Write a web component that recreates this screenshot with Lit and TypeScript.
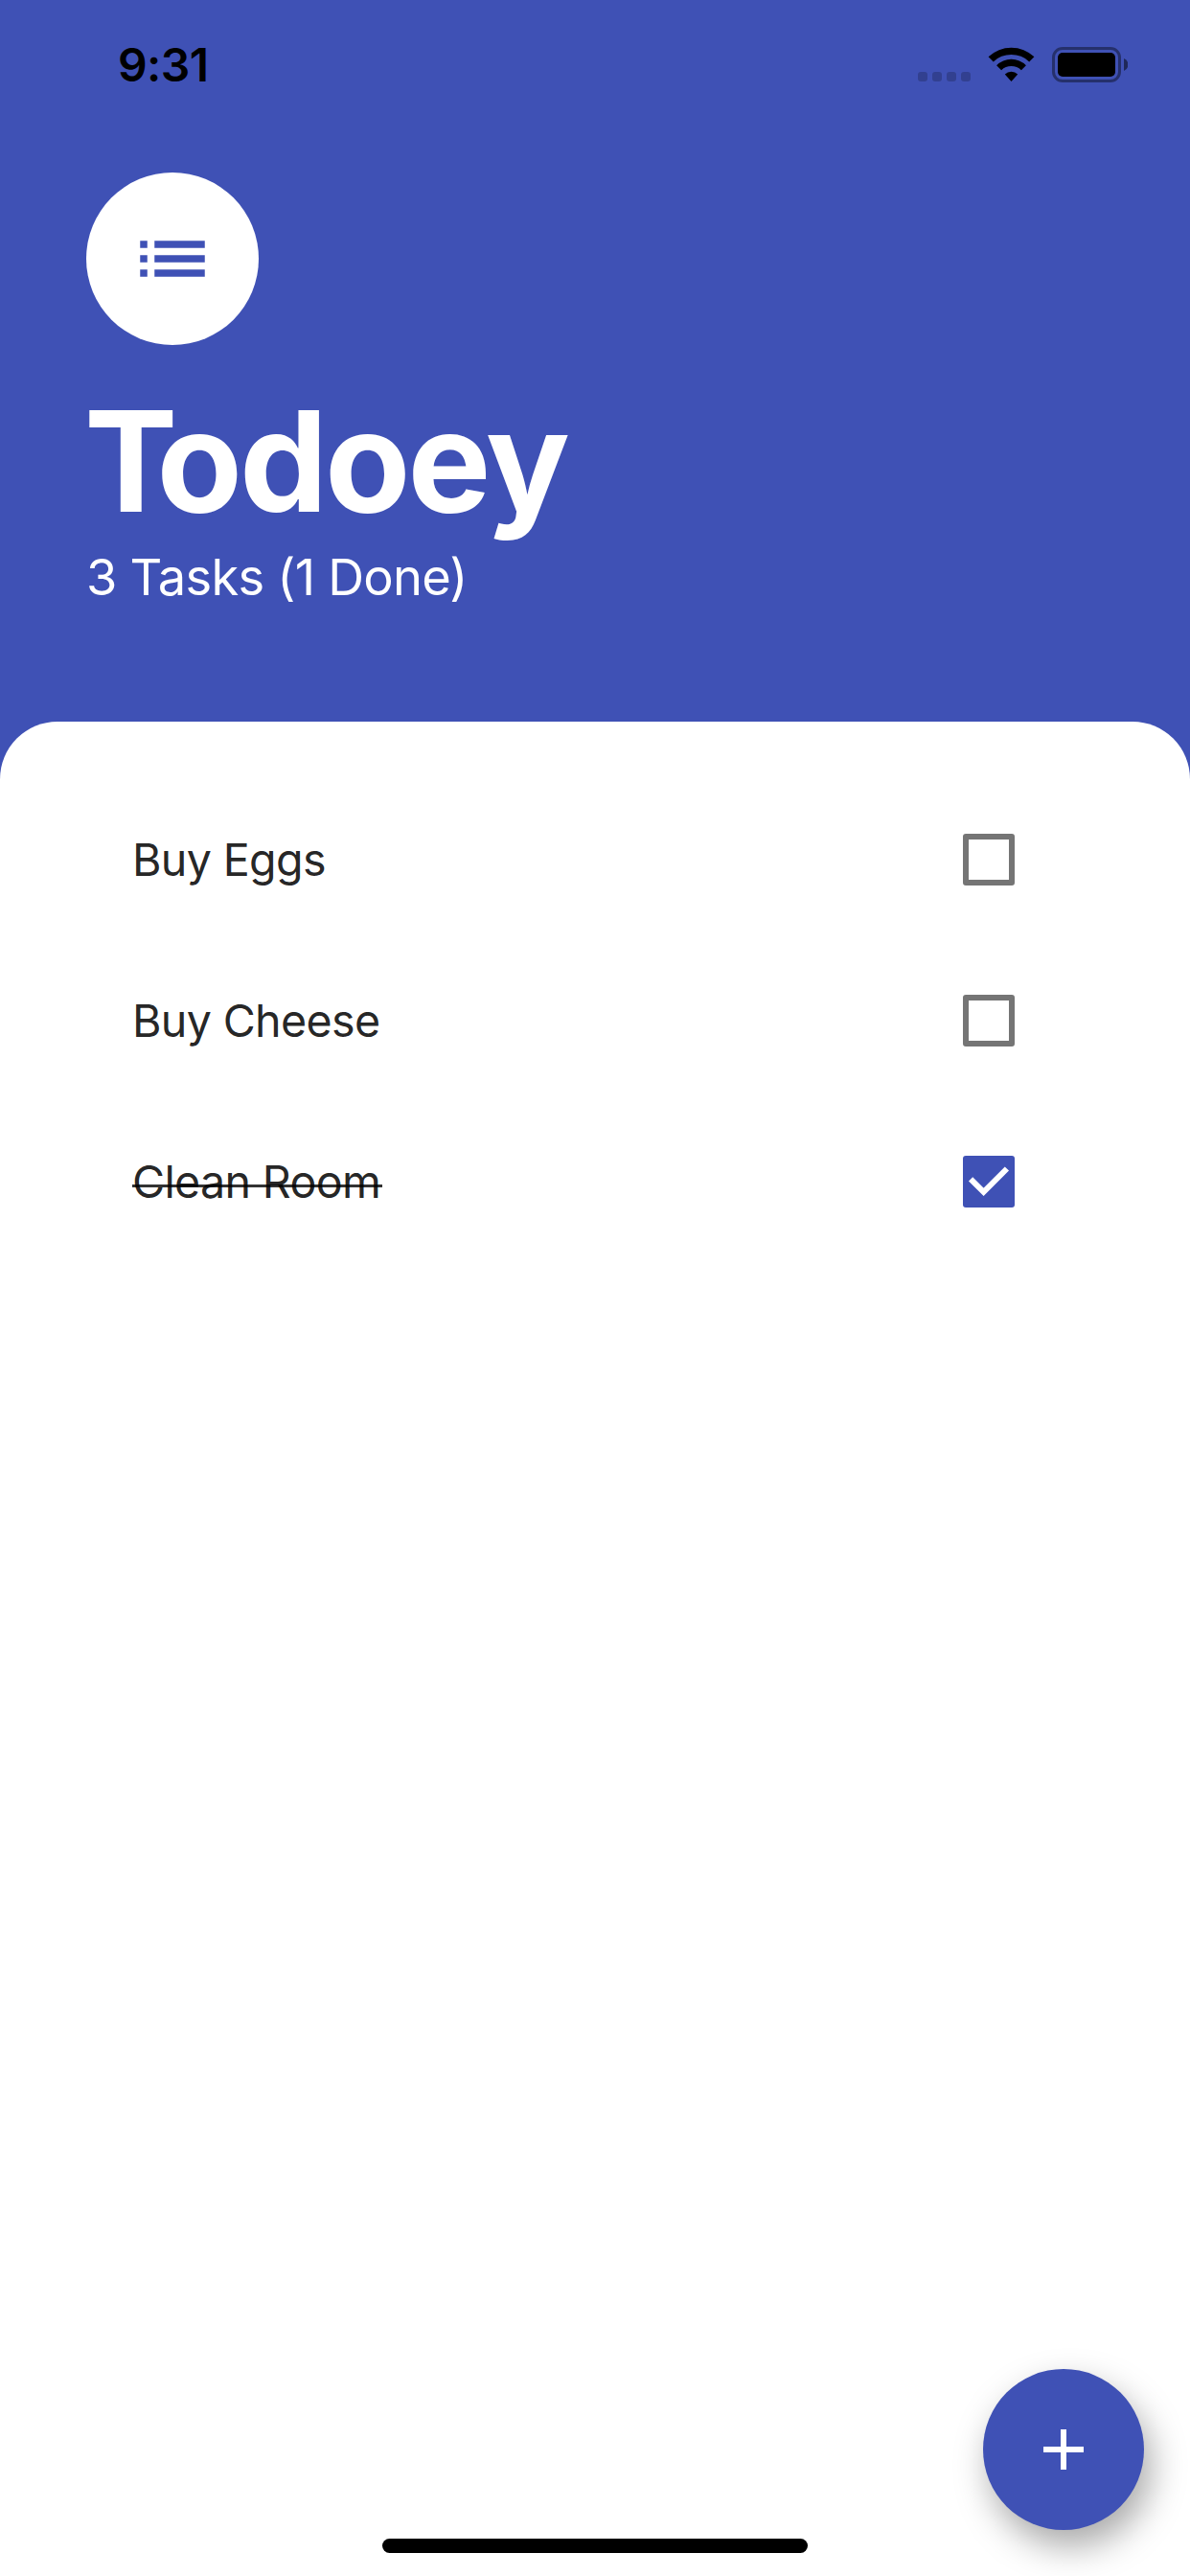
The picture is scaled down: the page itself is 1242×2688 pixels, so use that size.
import { LitElement, html, css, svg } from "lit";
import { customElement, property, state } from "lit/decorators.js";

interface Task {
  name: string;
  done: boolean;
}

@customElement("status-bar")
class StatusBar extends LitElement {
  static styles = css`
    :host {
      display: flex;
      justify-content: space-between;
      height: 100px;
      padding: 0 65px 0 123px;
      color: #000;
    }
    .time {
      margin-top: 38px;
      font-size: 48px;
      line-height: 60px;
      font-weight: 600;
      letter-spacing: -0.6px;
    }
    .icons {
      width: 219px;
      height: 37px;
      margin-top: 49px;
    }
  `;

  render() {
    return html`
      <div class="time">9:31</div>
      <svg class="icons" viewBox="0 0 219 37">
        <g fill="#000" fill-opacity="0.2">
          ${[0, 15, 30, 45].map(
            (x) => svg`<rect x=${x} y="26" width="10" height="10" rx="3" />`
          )}
        </g>
        <path d="M73.6 10.3A34.5 34.5 0 0 1 121.4 10.3L116.2 15.4A27 27 0 0 0 78.8 15.4Z" />
        <path d="M82.1 19.2A21.8 21.8 0 0 1 112.9 19.2L107.9 24.2A15 15 0 0 0 87.1 24.2Z" />
        <path d="M90.8 28.4A10 10 0 0 1 104.2 28.4L97.5 36Z" />
        <rect x="141.5" y="1.5" width="69" height="34" rx="9.5" fill="none" stroke="#000" stroke-opacity="0.4" stroke-width="3" />
        <rect x="146" y="6" width="60" height="25" rx="5" />
        <path d="M215 12A7 7 0 0 1 215 25Z" fill-opacity="0.5" />
      </svg>
    `;
  }
}

@customElement("task-row")
class TaskRow extends LitElement {
  @property() name = "";
  @property({ type: Boolean }) done = false;

  static styles = css`
    :host {
      display: flex;
      align-items: center;
      justify-content: space-between;
      height: 168px;
      padding: 0 93px 0 48px;
    }
    .name {
      font-size: 46.6px;
      line-height: 60px;
      color: rgba(0, 0, 0, 0.87);
      letter-spacing: -0.65px;
    }
    .done {
      padding-right: 2px;
      background: linear-gradient(rgba(0, 0, 0, 0.8), rgba(0, 0, 0, 0.8)) 0 33px / 100% 3px no-repeat;
    }
    .box {
      width: 54px;
      height: 54px;
      box-sizing: border-box;
      border: 6px solid #757575;
      border-radius: 3px;
    }
    .checked {
      border: 0;
      background: #3f51b5;
    }
    .check {
      display: block;
      width: 54px;
      height: 54px;
    }
  `;

  render() {
    return html`
      <span class="name ${this.done ? "done" : ""}">${this.name}</span>
      <span class="box ${this.done ? "checked" : ""}">
        ${this.done
          ? html`<svg class="check" viewBox="0 0 54 54">
              <path d="M8.1 24.3L21.6 37.8L45.9 13.5" fill="none" stroke="#fff" stroke-width="6" />
            </svg>`
          : ""}
      </span>
    `;
  }
}

@customElement("app-root")
class AppRoot extends LitElement {
  @state() private tasks: Task[] = [
    { name: "Buy Eggs", done: false },
    { name: "Buy Cheese", done: false },
    { name: "Clean Room", done: true },
  ];

  static styles = css`
    :host {
      display: flex;
      flex-direction: column;
      position: relative;
      width: 1242px;
      height: 2688px;
      overflow: hidden;
      background: #3f51b5;
      font-family: Inter, "Liberation Sans", sans-serif;
    }
    .header {
      display: flex;
      flex-direction: column;
      height: 573px;
      margin-top: 80px;
      padding: 0 90px;
      color: #fff;
    }
    .avatar {
      display: flex;
      align-items: center;
      justify-content: center;
      width: 180px;
      height: 180px;
      border-radius: 50%;
      background: #fff;
    }
    .list-icon {
      width: 90px;
      height: 90px;
      fill: #3f51b5;
    }
    .title {
      margin: 33px 0 0 -2px;
      font-size: 146px;
      line-height: 176px;
      font-weight: 700;
      letter-spacing: -3px;
    }
    .initial {
      letter-spacing: -22px;
    }
    .subtitle {
      font-size: 52.4px;
      line-height: 66px;
      letter-spacing: -0.75px;
    }
    .sheet {
      flex: 1;
      padding: 60px 90px 0;
      border-radius: 60px 60px 0 0;
      background: #fff;
    }
    .fab {
      position: absolute;
      left: 1026px;
      top: 2472px;
      display: flex;
      align-items: center;
      justify-content: center;
      width: 168px;
      height: 168px;
      border-radius: 50%;
      background: #3f51b5;
      box-shadow: 7px 17px 36px rgba(0, 0, 0, 0.34);
    }
    .plus {
      width: 72px;
      height: 72px;
      fill: #fff;
    }
    .home {
      position: absolute;
      left: 399px;
      top: 2649px;
      width: 444px;
      height: 15px;
      border-radius: 8px;
      background: #000;
    }
  `;

  render() {
    const done = this.tasks.filter((t) => t.done).length;
    return html`
      <status-bar></status-bar>
      <div class="header">
        <div class="avatar">
          <svg class="list-icon" viewBox="0 0 24 24">
            <path d="M3 13h2v-2H3v2zm0 4h2v-2H3v2zm0-8h2V7H3v2zm4 4h14v-2H7v2zm0 4h14v-2H7v2zM7 7v2h14V7H7z" />
          </svg>
        </div>
        <h1 class="title"><span class="initial">T</span>odoey</h1>
        <div class="subtitle">${this.tasks.length} Tasks (${done} Done)</div>
      </div>
      <div class="sheet">
        ${this.tasks.map(
          (t) => html`<task-row .name=${t.name} .done=${t.done}></task-row>`
        )}
      </div>
      <div class="fab">
        <svg class="plus" viewBox="0 0 24 24">
          <path d="M19 13h-6v6h-2v-6H5v-2h6V5h2v6h6v2z" />
        </svg>
      </div>
      <div class="home"></div>
    `;
  }
}
